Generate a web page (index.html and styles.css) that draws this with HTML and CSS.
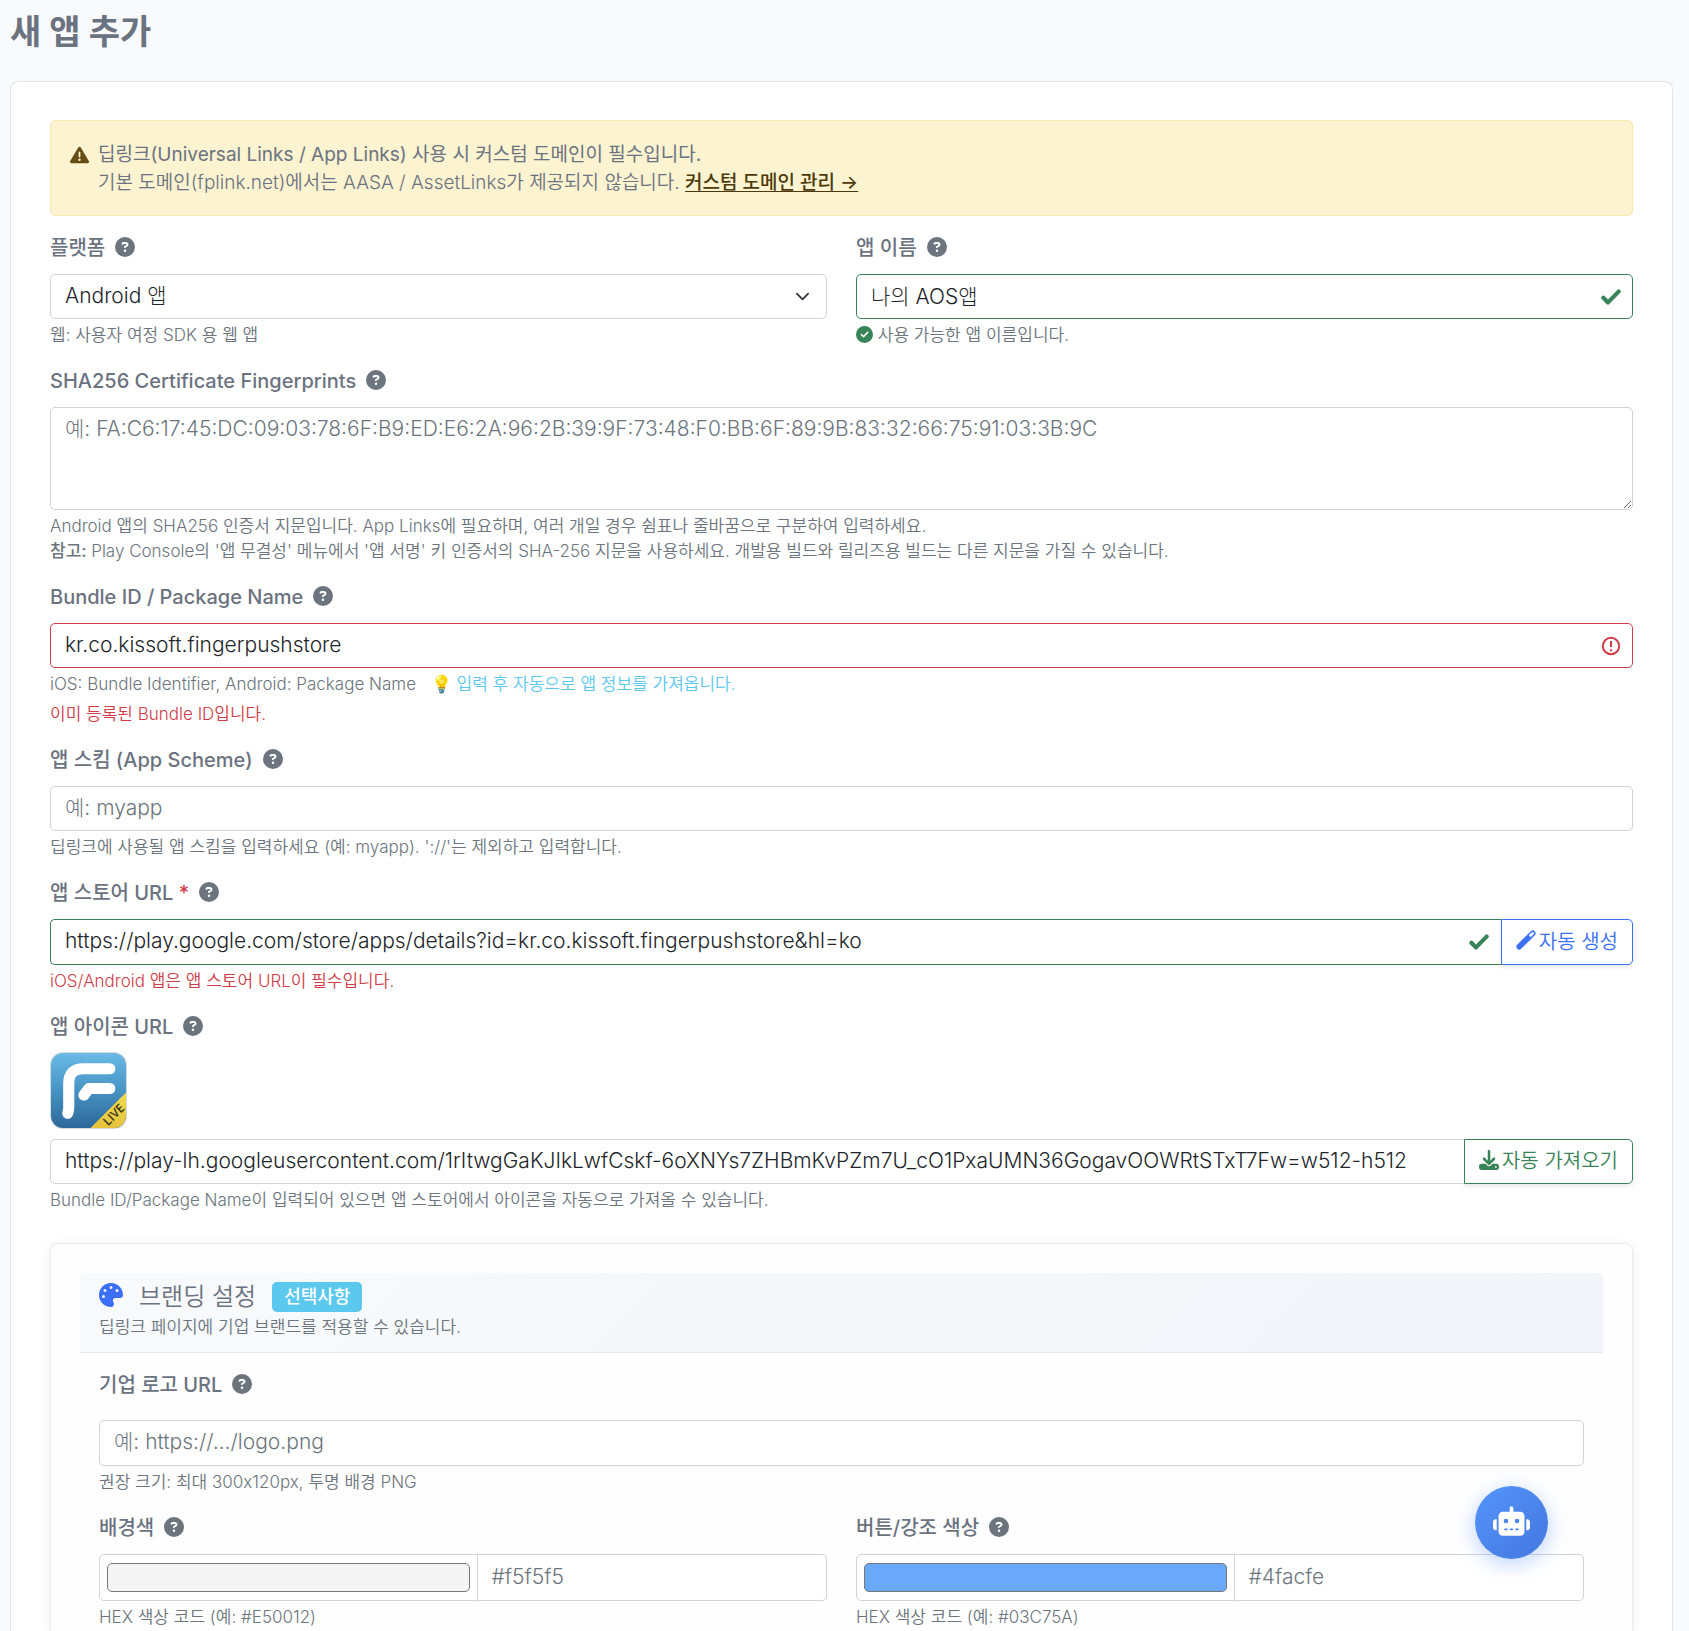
FILE: index.html
```html
<!DOCTYPE html>
<html lang="ko">
<head>
<meta charset="utf-8">
<meta name="viewport" content="width=device-width, initial-scale=1">
<title>새 앱 추가</title>
<link rel="stylesheet" href="styles.css">
</head>
<body>
<svg class="sprite" aria-hidden="true">
  <symbol id="i-question" viewBox="0 0 512 512"><path d="M256 512A256 256 0 1 0 256 0a256 256 0 1 0 0 512zM169.800 165.300c7.900-22.300 29.100-37.300 52.800-37.300h58.300c34.900 0 63.100 28.300 63.100 63.100c0 22.600-12.100 43.500-31.700 54.800L280 264.400c-.2 13-10.900 23.600-24 23.600c-13.300 0-24-10.700-24-24V250.500c0-8.600 4.600-16.500 12.100-20.800l44.300-25.400c4.700-2.700 7.600-7.700 7.600-13.100c0-8.400-6.800-15.100-15.100-15.100H222.600c-3.400 0-6.400 2.100-7.500 5.300l-.4 1.200c-4.400 12.500-18.200 19-30.600 14.600s-19-18.200-14.600-30.600l.4-1.200zM224 352a32 32 0 1 1 64 0 32 32 0 1 1 -64 0z"/></symbol>
  <symbol id="i-circle-check" viewBox="0 0 512 512"><path d="M256 512A256 256 0 1 0 256 0a256 256 0 1 0 0 512zM369 209L241 337c-9.400 9.400-24.600 9.400-33.900 0l-64-64c-9.400-9.400-9.400-24.600 0-33.900s24.600-9.400 33.900 0l47 47L335 175c9.400-9.400 24.600-9.400 33.900 0s9.400 24.600 0 33.900z"/></symbol>
  <symbol id="i-check" viewBox="0 0 20 16"><path d="M2.400 8.800 7 13.400 17.600 2.600" fill="none" stroke="currentColor" stroke-width="4.200" stroke-linecap="round" stroke-linejoin="round"/></symbol>
</svg>

<h1 class="page-title">새 앱 추가</h1>

<form class="card">
  <div class="alert" role="alert">
    <svg class="alert-icon" viewBox="0 0 512 512" aria-hidden="true"><path d="M256 32c14.200 0 27.300 7.500 34.500 19.800l216 368c7.300 12.400 7.300 27.700 .2 40.100S486.300 480 472 480H40c-14.300 0-27.600-7.700-34.700-20.100s-7-27.800 .2-40.100l216-368C228.700 39.500 241.800 32 256 32zm0 128c-13.300 0-24 10.700-24 24V296c0 13.300 10.700 24 24 24s24-10.700 24-24V184c0-13.300-10.700-24-24-24zm32 224a32 32 0 1 0 -64 0 32 32 0 1 0 64 0z"/></svg>
    <div>
      <strong class="alert-title">딥링크(Universal Links / App Links) 사용 시 커스텀 도메인이 필수입니다.</strong>
      <p class="alert-text">기본 도메인(fplink.net)에서는 AASA / AssetLinks가 제공되지 않습니다. <a class="alert-link" href="#domains">커스텀 도메인 관리 →</a></p>
    </div>
  </div>

  <div class="columns">
    <div class="field">
      <div class="label-row"><label for="platform">플랫폼</label><svg class="help-icon" aria-hidden="true"><use href="#i-question"/></svg></div>
      <div class="control-wrap">
        <select class="control" id="platform"><option>Android 앱</option></select>
        <svg class="chevron" viewBox="0 0 16 16" aria-hidden="true"><path d="m2 5 6 6 6-6"/></svg>
      </div>
      <p class="help">웹: 사용자 여정 SDK 용 웹 앱</p>
    </div>
    <div class="field">
      <div class="label-row"><label for="name">앱 이름</label><svg class="help-icon" aria-hidden="true"><use href="#i-question"/></svg></div>
      <div class="control-wrap">
        <input class="control valid" id="name" type="text" value="나의 AOS앱">
        <svg class="state-icon" viewBox="0 0 20 16" aria-hidden="true"><use href="#i-check"/></svg>
      </div>
      <p class="help"><svg class="ok-icon" aria-hidden="true"><use href="#i-circle-check"/></svg> 사용 가능한 앱 이름입니다.</p>
    </div>
  </div>

  <div class="field">
    <div class="label-row"><label for="sha">SHA256 Certificate Fingerprints</label><svg class="help-icon" aria-hidden="true"><use href="#i-question"/></svg></div>
    <textarea class="control" id="sha" rows="3" placeholder="예: FA:C6:17:45:DC:09:03:78:6F:B9:ED:E6:2A:96:2B:39:9F:73:48:F0:BB:6F:89:9B:83:32:66:75:91:03:3B:9C"></textarea>
    <p class="help">Android 앱의 SHA256 인증서 지문입니다. App Links에 필요하며, 여러 개일 경우 쉼표나 줄바꿈으로 구분하여 입력하세요.<br><strong>참고:</strong> Play Console의 '앱 무결성' 메뉴에서 '앱 서명' 키 인증서의 SHA-256 지문을 사용하세요. 개발용 빌드와 릴리즈용 빌드는 다른 지문을 가질 수 있습니다.</p>
  </div>

  <div class="field">
    <div class="label-row"><label for="bundle">Bundle ID / Package Name</label><svg class="help-icon" aria-hidden="true"><use href="#i-question"/></svg></div>
    <div class="control-wrap">
      <input class="control invalid" id="bundle" type="text" value="kr.co.kissoft.fingerpushstore">
      <svg class="error-icon" viewBox="0 0 20 20" aria-hidden="true"><circle cx="10" cy="10" r="8.200"/><path d="M10 5v6"/><path d="M10 13.200v2"/></svg>
    </div>
    <p class="help">iOS: Bundle Identifier, Android: Package Name <span class="info">💡 입력 후 자동으로 앱 정보를 가져옵니다.</span></p>
    <p class="help error spaced">이미 등록된 Bundle ID입니다.</p>
  </div>

  <div class="field">
    <div class="label-row"><label for="scheme">앱 스킴 (App Scheme)</label><svg class="help-icon" aria-hidden="true"><use href="#i-question"/></svg></div>
    <input class="control" id="scheme" type="text" placeholder="예: myapp">
    <p class="help">딥링크에 사용될 앱 스킴을 입력하세요 (예: myapp). '://'는 제외하고 입력합니다.</p>
  </div>

  <div class="field">
    <div class="label-row"><label for="store">앱 스토어 URL <span class="required">*</span></label><svg class="help-icon" aria-hidden="true"><use href="#i-question"/></svg></div>
    <div class="group">
      <div class="control-wrap">
        <input class="control tall valid" id="store" type="text" value="https://play.google.com/store/apps/details?id=kr.co.kissoft.fingerpushstore&amp;hl=ko">
        <svg class="state-icon" viewBox="0 0 20 16" aria-hidden="true"><use href="#i-check"/></svg>
      </div>
      <button class="btn primary" type="button"><svg viewBox="0 0 20 20" aria-hidden="true"><path fill-rule="evenodd" d="M.9 15.100 15.100.9a2.900 2.900 0 0 1 4 4L4.900 19.100a2.900 2.900 0 0 1-4-4zM12.800 5.300l1.900 1.900 2.900-2.900a1.300 1.300 0 0 0-1.900-1.900z"/></svg>자동 생성</button>
    </div>
    <p class="help error">iOS/Android 앱은 앱 스토어 URL이 필수입니다.</p>
  </div>

  <div class="field">
    <div class="label-row tight"><label for="icon">앱 아이콘 URL</label><svg class="help-icon" aria-hidden="true"><use href="#i-question"/></svg></div>
    <svg class="app-icon" viewBox="0 0 76 76" role="img" aria-label="앱 아이콘">
      <defs>
        <linearGradient id="sky" x1="0" y1="0" x2="0" y2="1"><stop offset="0" stop-color="#6cbae6"/><stop offset=".45" stop-color="#4a98c8"/><stop offset="1" stop-color="#2c6698"/></linearGradient>
        <linearGradient id="gold" x1="0" y1="0" x2="0" y2="1"><stop offset="0" stop-color="#f0dc50"/><stop offset="1" stop-color="#e6c23a"/></linearGradient>
        <clipPath id="tile"><rect x="1" y="1" width="74" height="74" rx="12"/></clipPath>
      </defs>
      <rect width="76" height="76" rx="13" fill="#d5dade"/>
      <g clip-path="url(#tile)">
        <rect width="76" height="76" fill="url(#sky)"/>
        <g fill="none" stroke="#fff" stroke-width="11" stroke-linecap="round" stroke-linejoin="round"><path d="M17.500 60.500Q18.500 58 18.500 54V31Q18.500 16.500 33 16.500H59"/><path d="m33.500 42.500 5-6.500H59"/></g>
        <path d="M76 39v37H39z" fill="url(#gold)"/>
        <text class="live" x="63" y="66" transform="rotate(-45 63 62)">LIVE</text>
      </g>
    </svg>
    <div class="group">
      <div class="control-wrap"><input class="control" id="icon" type="text" value="https://play-lh.googleusercontent.com/1rItwgGaKJIkLwfCskf-6oXNYs7ZHBmKvPZm7U_cO1PxaUMN36GogavOOWRtSTxT7Fw=w512-h512"></div>
      <button class="btn success" type="button"><svg viewBox="0 0 512 512" aria-hidden="true"><path d="M288 32c0-17.700-14.300-32-32-32s-32 14.300-32 32V274.700l-73.400-73.400c-12.500-12.500-32.800-12.500-45.300 0s-12.500 32.800 0 45.300l128 128c12.500 12.500 32.800 12.500 45.300 0l128-128c12.500-12.500 12.500-32.800 0-45.300s-32.800-12.500-45.300 0L288 274.700V32zM64 352c-35.300 0-64 28.700-64 64v32c0 35.300 28.700 64 64 64H448c35.300 0 64-28.700 64-64V416c0-35.300-28.700-64-64-64H346.500l-45.300 45.300c-25 25-65.500 25-90.500 0L165.500 352H64zm368 56a24 24 0 1 1 0 48 24 24 0 1 1 0-48z"/></svg>자동 가져오기</button>
    </div>
    <p class="help">Bundle ID/Package Name이 입력되어 있으면 앱 스토어에서 아이콘을 자동으로 가져올 수 있습니다.</p>
  </div>

  <section class="branding">
    <header class="branding-header">
      <h2 class="branding-title">
        <svg class="palette" viewBox="0 0 512 512" aria-hidden="true"><path d="M512 256c0 .9 0 1.800 0 2.700c-.4 36.500-33.600 61.300-70.100 61.300H344c-26.500 0-48 21.500-48 48c0 3.400 .4 6.700 1 9.900c2.100 10.200 6.500 20 10.800 29.900c6.100 13.800 12.100 27.500 12.100 42c0 31.800-21.600 60.700-53.400 62c-3.500 .1-7 .2-10.600 .2C114.600 512 0 397.400 0 256S114.600 0 256 0S512 114.600 512 256zM128 288a32 32 0 1 0 -64 0 32 32 0 1 0 64 0zm0-96a32 32 0 1 0 0-64 32 32 0 1 0 0 64zM288 96a32 32 0 1 0 -64 0 32 32 0 1 0 64 0zm96 96a32 32 0 1 0 0-64 32 32 0 1 0 0 64z"/></svg>
        브랜딩 설정
        <span class="badge">선택사항</span>
      </h2>
      <p class="branding-sub">딥링크 페이지에 기업 브랜드를 적용할 수 있습니다.</p>
    </header>
    <div class="branding-body">
      <div class="field">
        <div class="label-row roomy"><label for="logo">기업 로고 URL</label><svg class="help-icon" aria-hidden="true"><use href="#i-question"/></svg></div>
        <input class="control tall" id="logo" type="text" placeholder="예: https://.../logo.png">
        <p class="help">권장 크기: 최대 300x120px, 투명 배경 PNG</p>
      </div>
      <div class="columns">
        <div class="field">
          <div class="label-row"><label for="bg">배경색</label><svg class="help-icon" aria-hidden="true"><use href="#i-question"/></svg></div>
          <div class="color-group">
            <input class="control color" id="bg" type="color" value="#f5f5f5">
            <input class="control" type="text" placeholder="#f5f5f5" aria-label="배경색 HEX">
          </div>
          <p class="help">HEX 색상 코드 (예: #E50012)</p>
        </div>
        <div class="field">
          <div class="label-row"><label for="accent">버튼/강조 색상</label><svg class="help-icon" aria-hidden="true"><use href="#i-question"/></svg></div>
          <div class="color-group">
            <input class="control color" id="accent" type="color" value="#6aa8fa">
            <input class="control" type="text" placeholder="#4facfe" aria-label="버튼/강조 색상 HEX">
          </div>
          <p class="help">HEX 색상 코드 (예: #03C75A)</p>
        </div>
      </div>
    </div>
  </section>
</form>

<button class="chat-button" type="button" aria-label="챗봇">
  <svg viewBox="0 0 640 512" aria-hidden="true"><path d="M320 0c17.700 0 32 14.300 32 32V96H472c39.800 0 72 32.200 72 72V440c0 39.800-32.200 72-72 72H168c-39.800 0-72-32.200-72-72V168c0-39.800 32.200-72 72-72H288V32c0-17.700 14.300-32 32-32zM208 384c-8.800 0-16 7.200-16 16s7.200 16 16 16h32c8.800 0 16-7.200 16-16s-7.200-16-16-16H208zm96 0c-8.800 0-16 7.200-16 16s7.200 16 16 16h32c8.800 0 16-7.200 16-16s-7.200-16-16-16H304zm96 0c-8.800 0-16 7.200-16 16s7.200 16 16 16h32c8.800 0 16-7.200 16-16s-7.200-16-16-16H400zM264 256a40 40 0 1 0 -80 0 40 40 0 1 0 80 0zm152 40a40 40 0 1 0 0-80 40 40 0 1 0 0 80zM48 224H64V416H48c-26.500 0-48-21.500-48-48V272c0-26.500 21.500-48 48-48zm544 0c26.500 0 48 21.500 48 48v96c0 26.500-21.500 48-48 48H576V224h16z"/></svg>
</button>
</body>
</html>
```
FILE: styles.css
```css
:root {
  --text: #6b7280;
  --muted: #6c757d;
  --ink: #212529;
  --line: #ced4da;
  --green: #388458;
  --red: #d03c48;
  --blue: #3b6ff5;
  --sky: #5bc8ee;
}

* { box-sizing: border-box; }

body {
  display: flex;
  flex-direction: column;
  min-height: 100vh;
  margin: 0;
  padding: 0 16px 0 10px;
  background: #f8fafc;
  color: var(--text);
  font-family: Inter, "Noto Sans CJK KR", sans-serif;
  font-size: 21px;
  font-weight: 300;
}

h1, h2, p { margin: 0; }
input, select, textarea, button { font: inherit; }
svg { fill: currentColor; }
.sprite { position: absolute; width: 0; height: 0; }

.page-title {
  padding: 8px 0 25px;
  font-size: 34px;
  font-weight: 700;
  line-height: 48px;
}

.card {
  display: flex;
  flex: 1;
  flex-direction: column;
  padding: 38px 39px 0;
  background: #fff;
  border: 1px solid #e2e6eb;
  border-bottom: 0;
  border-radius: 8px 8px 0 0;
}

.alert {
  display: flex;
  gap: 9px;
  margin-bottom: 16px;
  padding: 20px 19px 18px;
  background: #fcf3d0;
  border: 1px solid #fbe9b0;
  border-radius: 5px;
  font-size: 19px;
  font-weight: 350;
  line-height: 28px;
}
.alert-icon { flex: none; width: 19px; height: 28px; color: #664d13; }
.alert-title { display: block; font-weight: 400; }
.alert-link { color: #4b390c; font-weight: 450; text-underline-offset: 2px; }

.columns {
  display: grid;
  grid-template-columns: 1fr 1fr;
  column-gap: 29px;
}

.field { margin-bottom: 18px; }

.label-row {
  display: flex;
  align-items: center;
  gap: 10px;
  margin-bottom: 12px;
  font-size: 20px;
  font-weight: 450;
  line-height: 30px;
}
.label-row label { padding-top: 2px; line-height: 28px; }
.label-row.tight { margin-bottom: 11px; }
.label-row.roomy { margin-bottom: 21px; }
.help-icon { width: 20px; height: 20px; color: var(--muted); }
.required { color: var(--red); }

.control-wrap { position: relative; flex: 1; }

.control {
  display: block;
  width: 100%;
  height: 45px;
  padding: 6px 14px 7px;
  background: #fff;
  border: 1px solid var(--line);
  border-radius: 5px;
  color: var(--ink);
  line-height: 30px;
  appearance: none;
}
.control::placeholder { color: var(--muted); opacity: 1; }
input.control { padding: 5px 14px 8px; }
textarea.control { height: 103px; resize: vertical; }
.control.tall { height: 46px; }
.control.valid { border-color: var(--green); }
.control.invalid { border-color: var(--red); }

.chevron,
.state-icon,
.error-icon { position: absolute; top: 0; bottom: 0; margin: auto 0; pointer-events: none; }
.chevron { right: 17px; width: 15px; height: 15px; fill: none; stroke: #343a40; stroke-width: 2; stroke-linecap: round; stroke-linejoin: round; }
.state-icon { right: 12px; width: 20px; height: 16px; color: var(--green); }
.error-icon { right: 12px; width: 20px; height: 20px; fill: none; stroke: var(--red); stroke-width: 2; }

.help {
  padding-top: 4px;
  color: var(--muted);
  font-size: 17px;
  font-weight: 350;
  line-height: 25px;
  margin-bottom: -1px;
}
.help strong { font-weight: 500; }
.ok-icon { width: 17px; height: 17px; color: var(--green); vertical-align: -2px; }
.info { margin-left: 10px; color: var(--sky); }
.help.error { color: var(--red); }
.help.spaced { padding-top: 6px; }

.group { display: flex; }
.group .control { border-right: 0; border-radius: 5px 0 0 5px; }

.btn {
  display: flex;
  align-items: center;
  gap: 3px;
  padding: 0 14px 4px;
  background: #fff;
  border: 1px solid currentColor;
  border-radius: 0 5px 5px 0;
  box-shadow: 0 2px 5px rgba(0, 0, 0, .1);
  font-size: 20px;
  font-weight: 350;
}
.btn svg { width: 20px; height: 20px; }
.primary { color: var(--blue); }
.success { color: var(--green); }

.app-icon { display: block; width: 77px; height: 77px; margin-bottom: 10px; }
.live { fill: #383622; font-family: "Open Sans", sans-serif; font-size: 12px; font-weight: 600; text-anchor: middle; }

.branding {
  flex: 1;
  margin-top: 13px;
  padding: 29px 29px 0;
  background: #fefefe;
  border: 1px solid #ebecee;
  border-bottom: 0;
  border-radius: 8px 8px 0 0;
  box-shadow: 0 2px 12px rgba(0, 0, 0, .07);
}
.branding-header {
  padding: 7px 19px 12px;
  background: linear-gradient(135deg, #f8fafc, #f1f5f9);
  border-bottom: 1px solid #e2e8f0;
  border-radius: 5px 5px 0 0;
}
.branding-title {
  display: flex;
  align-items: center;
  gap: 16px;
  font-size: 24px;
  font-weight: 350;
  line-height: 34px;
}
.palette { width: 24px; height: 24px; margin-bottom: 4px; color: var(--blue); }
.badge {
  padding: 0 12px;
  background: var(--sky);
  border-radius: 5px;
  color: #fff;
  font-size: 18px;
  font-weight: 500;
  line-height: 30px;
}
.branding-sub { color: var(--muted); font-size: 17px; font-weight: 350; line-height: 26px; }
.branding-body { padding: 16px 19px 0; }
.branding-body .columns .field { margin-bottom: 0; }

.color-group { display: grid; grid-template-columns: 13fr 12fr; }
.color-group .control { height: 47px; border-left: 0; border-radius: 0 5px 5px 0; }
.color-group .color { padding: 8px 7px; border-left: 1px solid var(--line); border-radius: 5px 0 0 5px; }
.color::-webkit-color-swatch-wrapper { padding: 0; }
.color::-webkit-color-swatch { border: 1px solid #777; border-radius: 5px; }

.chat-button {
  position: fixed;
  right: 141px;
  bottom: 72px;
  display: grid;
  place-items: center;
  width: 73px;
  height: 73px;
  padding: 0;
  background: linear-gradient(135deg, #5594fb, #4377de);
  border: 0;
  border-radius: 50%;
  box-shadow: 0 5px 20px rgba(59, 130, 246, .35);
  color: #fff;
}
.chat-button svg { width: 37px; height: 30px; margin-bottom: 4px; }
```
